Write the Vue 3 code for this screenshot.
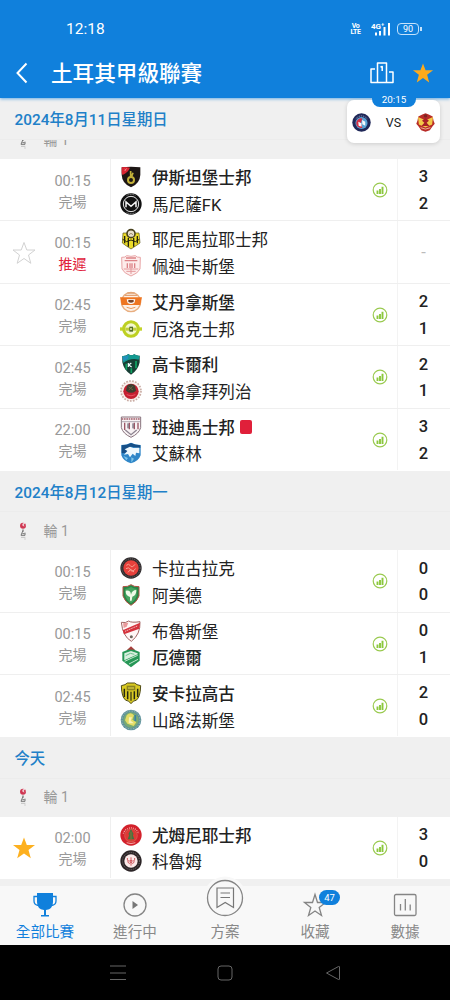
<template>
  <div class="screen">
    <!-- Crest shapes, shared by the rows below -->
    <svg class="sprite" width="0" height="0">
      <symbol id="istanbul" viewBox="0 0 66 66">
        <path d="M5 4Q33 0 61 4V26Q60 52 33 64Q6 52 5 26z" fill="#1d1614"/>
        <path d="M5 4Q18 2 30 5Q25 18 8 27L5 22z" fill="#d92432"/>
        <path d="M14 9l4 4M20 7l-6 8" stroke="#f4a0a0" stroke-width="2"/>
        <path d="M32 15V35M39 20L34 34" stroke="#c4b23a" stroke-width="5" fill="none"/>
        <circle cx="33" cy="42" r="9" fill="none" stroke="#c4b23a" stroke-width="6"/>
      </symbol>
      <symbol id="manisa" viewBox="0 0 66 66">
        <circle cx="33" cy="33" r="32" fill="#111"/>
        <circle cx="33" cy="33" r="23" fill="#111" stroke="#e8e8e8" stroke-width="3"/>
        <path d="M18 43V27L33 40L48 27V43" fill="none" stroke="#f4f4f4" stroke-width="4.500"/>
        <path d="M20 7Q33 1 46 7M20 59Q33 65 46 59" fill="none" stroke="#999" stroke-width="3" stroke-dasharray="3 2"/>
      </symbol>
      <symbol id="malatya" viewBox="0 0 66 66">
        <path d="M9 15H57L60 45Q50 52 33 63Q16 52 7 45z" fill="#ecdc28" stroke="#56521a" stroke-width="2"/>
        <path d="M14 24V46M25 30V56M41 30V56M52 24V46" stroke="#25240d" stroke-width="4"/>
        <path d="M8 34l12 7 13-5 13 5 12-7" stroke="#25240d" stroke-width="3" fill="none"/>
        <circle cx="33" cy="17" r="12" fill="#e9e1cc" stroke="#4a431e" stroke-width="5"/>
        <path d="M27 20q6-8 12 0" stroke="#9b8b6d" stroke-width="3" fill="none"/>
      </symbol>
      <symbol id="pendik" viewBox="0 0 66 66">
        <path d="M5 7Q15 8 20 2Q33 6 46 2Q51 8 61 7L60 42Q54 55 33 63Q12 55 6 42z" fill="#fdeceb" stroke="#e8a5a6" stroke-width="3"/>
        <path d="M18 9H48M14 17H52M22 25V39M30 25V39M36 25V39M44 25V39" stroke="#dc8287" stroke-width="4"/>
        <path d="M11 42H55M19 49H47M33 39V57" stroke="#e3989b" stroke-width="3"/>
      </symbol>
      <symbol id="adana" viewBox="0 0 66 66">
        <circle cx="33" cy="33" r="29" fill="#fdf1e7" stroke="#e8ae80" stroke-width="4"/>
        <path d="M14 13H52M22 6H44" stroke="#e0a276" stroke-width="4"/>
        <path d="M0 19H66L61 42H5z" fill="#ee7622"/>
        <path d="M20 25H46L43 36Q33 42 23 36z" fill="#fff"/>
        <path d="M25 27H41V33Q33 38 25 33z" fill="#76452d"/>
        <path d="M20 49Q33 56 46 49" stroke="#e9975d" stroke-width="3" fill="none"/>
      </symbol>
      <symbol id="eroks" viewBox="0 0 66 66">
        <path d="M0 28H66V38H0z" fill="#c3d32a"/>
        <circle cx="33" cy="33" r="22" fill="#f4f8cf" stroke="#bdd021" stroke-width="9"/>
        <path d="M16 29H50V38H16z" fill="#c0cf3c"/>
        <path d="M28 26H39V41H28z" fill="#526d28"/>
        <circle cx="33" cy="33" r="3" fill="#ecf0af"/>
      </symbol>
      <symbol id="kocaeli" viewBox="0 0 66 66">
        <path d="M7 9Q19 10 25 3Q33 10 43 4Q50 9 59 8V28Q54 53 33 65Q12 53 7 28z" fill="#173f35"/>
        <path d="M7 9Q19 10 25 3Q33 10 43 4Q50 9 59 8L56 20Q30 14 10 30z" fill="#139a91"/>
        <path d="M8 10Q18 12 26 5L24 17L9 25z" fill="#2191bc"/>
        <path d="M19 50V32M34 60V46M48 46V24" stroke="#10a765" stroke-width="5"/>
        <path d="M25 30V42M34 30L26 36L35 42" stroke="#eff" stroke-width="3.500" fill="none"/>
      </symbol>
      <symbol id="gencler" viewBox="0 0 66 66">
        <circle cx="33" cy="33" r="30" fill="#f8eeea" stroke="#c9aca4" stroke-width="5" stroke-dasharray="5 4"/>
        <circle cx="33" cy="34" r="23" fill="#c41f30"/>
        <path d="M21 17Q33 7 45 17L48 32Q33 45 18 32z" fill="#3d3f30"/>
        <path d="M26 21l13 9M38 19L26 30" stroke="#6d6240" stroke-width="3"/>
        <path d="M20 44Q33 51 46 44" stroke="#eb5263" stroke-width="3" fill="none"/>
      </symbol>
      <symbol id="bandirma" viewBox="0 0 66 66">
        <path d="M4 3H62V35Q57 53 33 64Q9 53 4 35z" fill="#f8f2f4" stroke="#88737d" stroke-width="3"/>
        <path d="M5 9H61" stroke="#a4606c" stroke-width="5" stroke-dasharray="5 2"/>
        <path d="M6 17H60" stroke="#8b8490" stroke-width="2"/>
        <path d="M14 20V42M28 20V40M43 20V40M54 20V40" stroke="#9b5565" stroke-width="4"/>
        <path d="M24 22V37M39 22V37" stroke="#504d5d" stroke-width="3"/>
        <path d="M16 42L33 56L50 42" stroke="#8d8490" stroke-width="4" fill="none"/>
      </symbol>
      <symbol id="erzurum" viewBox="0 0 66 66">
        <path d="M4 9Q20 9 33 2Q46 9 62 9V40Q56 58 33 64Q10 58 4 40z" fill="#2f86c8"/>
        <path d="M5 10Q22 10 33 3Q44 9 61 10V18L33 14L20 32L5 34z" fill="#174f87"/>
        <path d="M14 22L30 14L40 18L58 17V34L48 32L46 42L38 35L30 46L24 36L12 38L22 27z" fill="#eef8fd"/>
        <path d="M10 42l14 6-5 7M34 46l8 4-8 12" fill="#7cc5ea"/>
      </symbol>
      <symbol id="karagumruk" viewBox="0 0 66 66">
        <circle cx="33" cy="33" r="32" fill="#302c2e"/>
        <circle cx="33" cy="33" r="27.500" fill="none" stroke="#857d7d" stroke-width="2" stroke-dasharray="3 3"/>
        <circle cx="33" cy="33" r="23" fill="#e7413c"/>
        <path d="M19 25q7-7 12 1t14-4M18 35q9-7 13 3t16-3M24 46l8-9 10 8" stroke="#f7a594" stroke-width="3" fill="none"/>
      </symbol>
      <symbol id="amed" viewBox="0 0 66 66">
        <path d="M9 8Q24 9 33 2Q42 9 57 8V36Q51 54 33 64Q15 54 9 36z" fill="#278747" stroke="#ae5142" stroke-width="3"/>
        <path d="M16 15Q26 14 33 9Q40 14 50 15V35Q45 50 33 57Q21 50 16 35z" fill="#48a461"/>
        <path d="M17 20Q32 17 33 32Q36 18 49 18Q50 34 37 38L35 50H30V39Q16 34 17 20z" fill="#effae7"/>
      </symbol>
      <symbol id="bolu" viewBox="0 0 66 66">
        <path d="M4 7Q17 10 26 3Q34 9 60 5Q62 43 34 64Q8 49 4 7z" fill="#fff6f5" stroke="#a36664" stroke-width="3"/>
        <path d="M8 31L60 8L58 26L12 43z" fill="#d5323c"/>
        <path d="M15 34L52 18" stroke="#fff" stroke-width="2" stroke-dasharray="4 2"/>
        <path d="M9 10L25 8L20 20L11 24z" fill="#e99a9b"/>
        <circle cx="34" cy="50" r="4.500" fill="#6e655c"/>
      </symbol>
      <symbol id="igdir" viewBox="0 0 66 66">
        <path d="M20 13L33 1L46 13L40 19H26z" fill="#a83c3b"/>
        <path d="M7 18L24 11H42L59 18V44L33 64L7 44z" fill="#269756"/>
        <path d="M13 22L33 15L53 22V25L13 43z" fill="#d9f0df"/>
        <path d="M14 46L53 28M27 54L54 40" stroke="#bfe6cb" stroke-width="3"/>
        <path d="M17 29l14-7 12 3" stroke="#6cc28f" stroke-width="3" fill="none"/>
      </symbol>
      <symbol id="ankaragucu" viewBox="0 0 66 66">
        <path d="M4 11Q17 9 22 3H44Q49 9 62 11Q61 48 48 55Q40 55 33 65Q26 55 18 55Q5 48 4 11z" fill="#d9ca22" stroke="#4f4b16" stroke-width="3"/>
        <path d="M13 20V45M23 28V52M43 28V52M53 20V45" stroke="#252714" stroke-width="4.500"/>
        <path d="M20 11H46V25H20z" fill="#8c8420"/>
        <path d="M24 18H42" stroke="#e9df4e" stroke-width="3" fill="none"/>
        <path d="M33 29V56" stroke="#3c3b16" stroke-width="4"/>
      </symbol>
      <symbol id="sanliurfa" viewBox="0 0 66 66">
        <circle cx="33" cy="33" r="31" fill="#5d919e"/>
        <circle cx="33" cy="33" r="27" fill="none" stroke="#bfd5a4" stroke-width="2" stroke-dasharray="4 4"/>
        <circle cx="33" cy="33" r="23" fill="#79aa72"/>
        <path d="M20 19Q31 6 42 19L37 32L49 40L41 51L22 44L15 34z" fill="#e3dc65"/>
        <path d="M27 25H36L32 35L42 43H26" fill="#f8f2ba"/>
        <path d="M46 18V36" stroke="#3682a5" stroke-width="5"/>
      </symbol>
      <symbol id="umraniye" viewBox="0 0 66 66">
        <circle cx="33" cy="33" r="32" fill="#d3212b"/>
        <path d="M10 29A24 24 0 0 1 56 29" stroke="#f5a39d" stroke-width="4" fill="none" stroke-dasharray="3 3"/>
        <circle cx="33" cy="35" r="19" fill="#df3935" stroke="#d5695a" stroke-width="2"/>
        <path d="M33 15L41 31L38 32L43 46H23L28 32L25 31z" fill="#447341"/>
        <path d="M33 23V50" stroke="#8b7036" stroke-width="3"/>
        <path d="M20 56Q33 62 46 56" stroke="#f5a39d" stroke-width="3" fill="none"/>
      </symbol>
      <symbol id="corum" viewBox="0 0 66 66">
        <circle cx="33" cy="33" r="32" fill="#2c2527"/>
        <circle cx="33" cy="33" r="25.500" fill="none" stroke="#91898a" stroke-width="2" stroke-dasharray="3 3"/>
        <circle cx="33" cy="33" r="20" fill="#fbe9e8"/>
        <path d="M22 24Q21 38 33 31Q45 38 44 24M23 34Q28 47 33 34Q38 47 43 34M33 22V47" stroke="#cf5a61" stroke-width="3" fill="none"/>
      </symbol>
      <symbol id="johor" viewBox="0 0 66 66">
        <circle cx="33" cy="33" r="32" fill="#202858"/>
        <path d="M13 20Q33 0 53 20" fill="none" stroke="#99a3c9" stroke-width="3" stroke-dasharray="4 3"/>
        <circle cx="33" cy="35" r="21" fill="#58a3d5"/>
        <path d="M15 31Q23 15 36 19L31 34L36 52Q19 53 15 39z" fill="#d42f44"/>
        <path d="M22 30L33 36V48L23 44M35 24L46 30V44L36 39z" fill="#f7fbff"/>
      </symbol>
      <symbol id="selangor" viewBox="0 0 66 66">
        <path d="M33 1L44 5L58 12L61 27L65 37L57 47L48 60L33 65L18 60L9 47L1 37L5 27L8 12L22 5z" fill="#b82c28"/>
        <path d="M7 14L33 25L59 14L56 40L33 50L10 40z" fill="#f3c849"/>
        <path d="M33 17L45 27L37 34L47 45H19L29 34L21 27z" fill="#a71f27"/>
        <path d="M16 51Q33 61 50 51" stroke="#f6c5a5" stroke-width="3" fill="none"/>
        <circle cx="33" cy="10" r="6" fill="#7d2422"/>
      </symbol>
      <symbol id="league" viewBox="0 0 24 54">
        <circle cx="12" cy="11" r="9" fill="#cf3752"/>
        <circle cx="15" cy="8" r="5" fill="#f4dfe3"/>
        <circle cx="17" cy="9" r="3" fill="#cf3752"/>
        <path d="M12 22V30M12 25L6 40H18V32M10 35H17" stroke="#777" stroke-width="3" fill="none"/>
        <path d="M6 46H19M16 51h4" stroke="#aaa" stroke-width="2"/>
      </symbol>
      <symbol id="star" viewBox="0 0 24 24">
        <path d="M12 1.500L14.800 9H23L16.500 14L18.800 22.300L12 17.500L5.200 22.300L7.500 14L1 9H9.200z"/>
      </symbol>
    </svg>

    <header class="top">
      <div class="status">
        <span class="clock">12:18</span>
        <div class="status-icons">
          <span class="volte"><b>Vo</b><b>LTE</b></span>
          <svg class="signal" width="20" height="14" viewBox="0 0 20 14">
            <text x="0" y="6.500" class="net">4G⁺</text>
            <path d="M5 13.500V10.500M9 13.500V9M13.500 13.500V5M18 13.500V1" stroke="#fff" stroke-width="2"/>
          </svg>
          <span class="battery">90</span>
        </div>
      </div>
      <div class="title-bar">
        <svg class="back" width="12" height="22" viewBox="0 0 12 22">
          <path d="M10.500 1.500L1.500 11L10.500 20.500" fill="none" stroke="#fff" stroke-width="2"/>
        </svg>
        <h1>土耳其甲級聯賽</h1>
        <svg class="podium" width="24" height="22" viewBox="0 0 24 22">
          <path d="M7.500 20.500V1H16.500V20.500M5 7H1V20.500H23V10H19M10.500 5L12.200 4.500V9M7.500 20V7M16.500 20V10" fill="none" stroke="#fff" stroke-width="1.500" stroke-linejoin="round"/>
        </svg>
        <svg class="fav-top" width="22" height="22"><use href="#star"/></svg>
      </div>
    </header>

    <main class="list">
      <section v-for="(day, i) in days" :key="day.date">
        <h2 class="date">{{ day.date }}</h2>
        <div class="round-clip" :class="{ 'round-clip--scrolled': i === 0 }">
          <div class="round">
            <svg width="8" height="18"><use href="#league"/></svg>
            <span>輪 1</span>
          </div>
        </div>
        <div v-for="m in day.matches" :key="m.home.name" class="match">
          <div class="fav">
            <svg v-if="m.fav" width="24" height="24" :class="'fav--' + m.fav"><use href="#star"/></svg>
          </div>
          <div class="when">
            <span>{{ m.time }}</span>
            <span class="state" :class="{ 'state--late': m.late }">{{ m.late ? '推遲' : '完場' }}</span>
          </div>
          <div class="teams">
            <div v-for="t in [m.home, m.away]" :key="t.name" class="team" :class="{ 'team--win': t.win }">
              <svg width="22" height="22"><use :href="'#' + t.crest"/></svg>
              <span>{{ t.name }}</span>
              <i v-if="t.red" class="red-card"></i>
            </div>
          </div>
          <svg v-if="!m.late" class="stats" width="16" height="16" viewBox="0 0 16 16">
            <circle cx="8" cy="8" r="6.800" fill="none" stroke="#9aca50" stroke-width="1.200"/>
            <path d="M5.500 12V8.500M8 12V7M10.500 12V4.800" stroke="#8bc83c" stroke-width="1.900"/>
          </svg>
          <div class="score">
            <span v-if="m.late" class="no-score">-</span>
            <template v-else>
              <span>{{ m.home.goals }}</span>
              <span>{{ m.away.goals }}</span>
            </template>
          </div>
        </div>
      </section>
    </main>

    <!-- Pinned match -->
    <div class="pinned">
      <span class="pinned-time">20:15</span>
      <svg width="19" height="19"><use href="#johor"/></svg>
      <span class="vs">VS</span>
      <svg width="19" height="19"><use href="#selangor"/></svg>
    </div>

    <nav class="tabs">
      <div class="tab tab--active">
        <svg width="24" height="26" viewBox="0 0 24 26">
          <path d="M4 1H20V10Q20 17 13 18V23H16V24.500H8V23H11V18Q4 17 4 10z" fill="#1080dc"/>
          <path d="M4 4.500H1V9Q1 13 5.500 13.500M20 4.500H23V9Q23 13 18.500 13.500" fill="none" stroke="#1080dc" stroke-width="1.300"/>
        </svg>
        <span>全部比賽</span>
      </div>
      <div class="tab">
        <svg width="24" height="26" viewBox="0 0 24 26">
          <circle cx="12" cy="13" r="11" fill="none" stroke="#858585" stroke-width="1.300"/>
          <path d="M9.500 9L15 13L9.500 17z" fill="#777"/>
        </svg>
        <span>進行中</span>
      </div>
      <div class="tab tab--raised">
        <svg width="44" height="44" viewBox="0 0 44 44">
          <circle cx="22" cy="22" r="21.500" fill="#f8f8f8"/>
          <circle cx="22" cy="22" r="17.500" fill="#f8f8f8" stroke="#858585" stroke-width="1.300"/>
          <path d="M14 12H30.500V31.500L22.200 26.500L14 31.500zM17.500 17H27M17.500 21.500H27" fill="none" stroke="#777" stroke-width="1.200"/>
        </svg>
        <span>方案</span>
      </div>
      <div class="tab">
        <svg width="26" height="26" viewBox="0 0 26 26">
          <path d="M13 2.500L15.500 10.500H23.500L17.200 15.500L19.500 23.500L13 19L6.500 23.500L8.800 15.500L2.500 10.500H10.500z" fill="none" stroke="#858585" stroke-width="1.300"/>
        </svg>
        <b class="badge">47</b>
        <span>收藏</span>
      </div>
      <div class="tab">
        <svg width="24" height="26" viewBox="0 0 24 26">
          <rect x="1.500" y="2.500" width="21.500" height="21" rx="1.500" fill="none" stroke="#858585" stroke-width="1.300"/>
          <path d="M7.500 18.500V12M12.300 18.500V7M17.200 18.500V12.500" stroke="#858585" stroke-width="1.300"/>
        </svg>
        <span>數據</span>
      </div>
    </nav>

    <footer class="system">
      <svg width="16" height="16" viewBox="0 0 16 16">
        <path d="M0 1H16M0 8H16M0 14.500H16" stroke="#666" stroke-width="1"/>
      </svg>
      <svg width="16" height="16" viewBox="0 0 16 16">
        <rect x="1" y="1" width="14" height="14" rx="3" fill="none" stroke="#666" stroke-width="1"/>
      </svg>
      <svg width="16" height="16" viewBox="0 0 16 16">
        <path d="M14.500 2V14Q14.500 15 13.500 14.500L1.500 8L13.500 1.500Q14.500 1 14.500 2z" fill="none" stroke="#666" stroke-width="1"/>
      </svg>
    </footer>
  </div>
</template>

<script setup>
const team = (crest, name, goals, win = false, red = false) => ({ crest, name, goals, win, red })

const days = [
  {
    date: '2024年8月11日星期日',
    matches: [
      { time: '00:15', home: team('istanbul', '伊斯坦堡士邦', 3, true), away: team('manisa', '馬尼薩FK', 2) },
      { time: '00:15', late: true, fav: 'off', home: team('malatya', '耶尼馬拉耶士邦'), away: team('pendik', '佩迪卡斯堡') },
      { time: '02:45', home: team('adana', '艾丹拿斯堡', 2, true), away: team('eroks', '厄洛克士邦', 1) },
      { time: '02:45', home: team('kocaeli', '高卡爾利', 2, true), away: team('gencler', '真格拿拜列治', 1) },
      { time: '22:00', home: team('bandirma', '班迪馬士邦', 3, true, true), away: team('erzurum', '艾蘇林', 2) }
    ]
  },
  {
    date: '2024年8月12日星期一',
    matches: [
      { time: '00:15', home: team('karagumruk', '卡拉古拉克', 0), away: team('amed', '阿美德', 0) },
      { time: '00:15', home: team('bolu', '布魯斯堡', 0), away: team('igdir', '厄德爾', 1, true) },
      { time: '02:45', home: team('ankaragucu', '安卡拉高古', 2, true), away: team('sanliurfa', '山路法斯堡', 0) }
    ]
  },
  {
    date: '今天',
    matches: [
      { time: '02:00', fav: 'on', home: team('umraniye', '尤姆尼耶士邦', 3, true), away: team('corum', '科魯姆', 0) }
    ]
  }
]
</script>

<style>
body {
  margin: 0;
  background: #000;
}
</style>

<style scoped>
.screen {
  position: relative;
  width: 450px;
  height: 1000px;
  display: flex;
  flex-direction: column;
  overflow: hidden;
  background: #f0f0f0;
  font-family: Roboto, 'Noto Sans CJK TC', sans-serif;
  color: #222;
}

.screen svg {
  display: block;
  flex-shrink: 0;
}

.screen .sprite {
  position: absolute;
}

/* Header */
.top {
  height: 98px;
  flex-shrink: 0;
  background: #1080dc;
  color: #fff;
  box-shadow: 0 1px 3px rgba(16, 128, 220, 0.6);
  z-index: 1;
}

.status {
  display: flex;
  justify-content: space-between;
  align-items: center;
  height: 18px;
  padding: 20px 31px 10px 66px;
}

.clock {
  font-size: 15.500px;
}

.status-icons {
  display: flex;
  align-items: center;
}

.volte {
  display: flex;
  flex-direction: column;
  align-items: center;
  width: 9px;
  font-size: 7px;
  line-height: 6.500px;
  letter-spacing: -0.06em;
  margin-right: 11px;
}

.signal {
  margin-right: 6px;
}

.net {
  font-size: 8px;
  font-weight: 700;
  fill: #fff;
}

.battery {
  position: relative;
  width: 20px;
  height: 10px;
  border: 1.500px solid #c4e2fb;
  border-radius: 4px;
  font-size: 9px;
  line-height: 10.500px;
  text-align: center;
}

.battery::after {
  content: '';
  position: absolute;
  right: -3.500px;
  top: 3px;
  width: 2px;
  height: 4px;
  background: #c4e2fb;
}

.title-bar {
  display: flex;
  align-items: center;
  height: 50px;
  padding: 0 16px;
}

.title-bar h1 {
  margin: 0 auto 0 23px;
  padding-top: 1px;
  font-size: 21.600px;
  font-weight: 500;
  line-height: 30px;
}

.podium {
  margin-right: 18px;
}

.fav-top {
  fill: #fdaa1b;
}

/* Day and round headings */
.list {
  flex: 1;
  min-height: 0;
}

.date {
  box-sizing: border-box;
  height: 41.500px;
  margin: 0;
  padding-left: 14.500px;
  border-bottom: 1px solid #ececec;
  font-size: 15.350px;
  font-weight: 500;
  line-height: 44px;
  color: #2180c8;
}

.round-clip {
  display: flex;
  align-items: flex-end;
  height: 37.700px;
  overflow: hidden;
}

.round-clip--scrolled {
  height: 19.500px;
}

.round {
  box-sizing: border-box;
  display: flex;
  align-items: center;
  gap: 17px;
  height: 38px;
  padding: 0 0 1px 18.500px;
  font-size: 14px;
  line-height: 18px;
  color: #999;
}

/* Match rows */
.match {
  box-sizing: border-box;
  display: flex;
  align-items: center;
  height: 62.400px;
  background: #fff;
  border-bottom: 1px solid #efefef;
}

.match:last-child {
  border-bottom-color: #fff;
}

.fav {
  width: 36px;
  padding: 2px 0 0 12px;
  box-sizing: border-box;
}

.fav--off {
  fill: none;
  stroke: #d2d2d2;
}

.fav--on {
  fill: #fdb01f;
}

.when {
  width: 74px;
  box-sizing: border-box;
  padding: 4px 1px 0 0;
  display: flex;
  flex-direction: column;
  align-items: center;
  font-size: 14.500px;
  line-height: 20px;
  color: #999;
}

.state {
  font-size: 14px;
}

.state--late {
  color: #e0203a;
}

.teams {
  flex: 1;
  align-self: stretch;
  display: flex;
  flex-direction: column;
  justify-content: center;
  padding: 1.500px 0 0 9px;
  border-left: 1px solid #efefef;
}

.team {
  display: flex;
  align-items: center;
  height: 26.700px;
  font-size: 16.600px;
}

.team span {
  margin-left: 10px;
}

.team--win {
  font-weight: 500;
}

.red-card {
  width: 12px;
  height: 14px;
  margin-left: 5px;
  border-radius: 2px;
  background: #e0203a;
}

.stats {
  margin: 1px 9px 0 0;
}

.score {
  width: 53px;
  box-sizing: border-box;
  align-self: stretch;
  display: flex;
  flex-direction: column;
  align-items: center;
  justify-content: center;
  padding: 3px 1px 0 0;
  border-left: 1px solid #f3f3f3;
  font-size: 16.500px;
  font-weight: 500;
  line-height: 26.700px;
}

.no-score {
  font-weight: 400;
  color: #bbb;
}

/* Pinned match */
.pinned {
  position: absolute;
  top: 100px;
  left: 347px;
  z-index: 2;
  box-sizing: border-box;
  width: 93px;
  height: 43px;
  padding: 1px 5px 0;
  display: flex;
  align-items: center;
  justify-content: space-between;
  border-radius: 7px;
  background: #fff;
  box-shadow: 0 1px 4px rgba(0, 0, 0, 0.15);
}

.pinned-time {
  position: absolute;
  top: -8px;
  left: 25px;
  width: 44px;
  height: 15px;
  border-radius: 0 0 8px 8px;
  background: #1080dc;
  color: #fff;
  font-size: 9.800px;
  line-height: 16px;
  text-align: center;
}

.vs {
  font-size: 12.500px;
}

/* Bottom tabs */
.tabs {
  display: flex;
  flex-shrink: 0;
  height: 59px;
  background: #f8f8f8;
}

.tab {
  position: relative;
  flex: 1;
  display: flex;
  flex-direction: column;
  align-items: center;
  padding-top: 6px;
  font-size: 14.600px;
  line-height: 20px;
  color: #888;
}

.tab span {
  margin-top: 4px;
}

.tab--active {
  color: #1080dc;
}

.tab--raised svg {
  margin-top: -16px;
}

.tab--raised span {
  margin-top: 2px;
}

.badge {
  position: absolute;
  top: 4px;
  left: 49px;
  width: 21px;
  height: 15px;
  border-radius: 8px;
  background: #1080dc;
  color: #fff;
  font-size: 9.500px;
  font-weight: 400;
  line-height: 15px;
  text-align: center;
}

/* System navigation */
.system {
  display: flex;
  flex-shrink: 0;
  justify-content: space-between;
  align-items: center;
  height: 55px;
  padding: 0 109.500px;
  box-sizing: border-box;
  background: #000;
}
</style>
